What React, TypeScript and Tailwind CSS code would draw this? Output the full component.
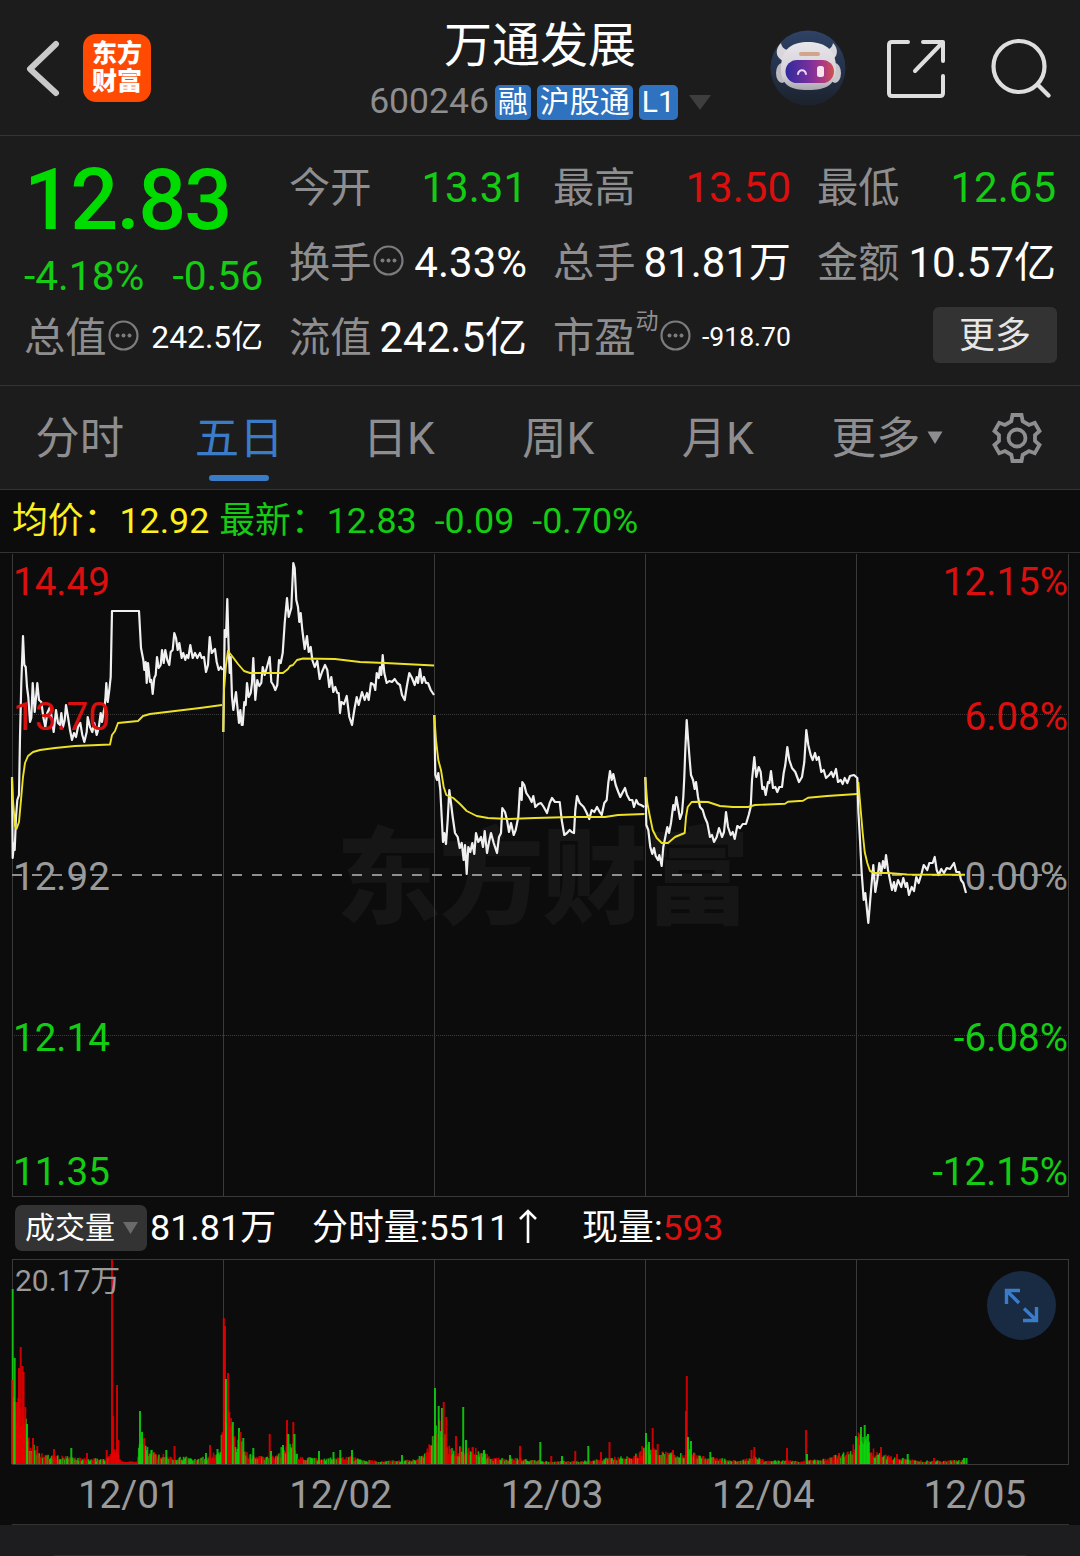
import type { ReactNode } from "react";

type Point = [number, number];

// One polyline per trading day, in page pixels
const priceDays: string[] = [
  "12,777 12.7,858 14,843 14.7,850 16,817 17.3,800 19,795 20,737 21.3,683 23,636 24.3,665 25.7,667 27,687 28.3,697 30,722 31.3,718 32.7,683 34.7,712 37.3,683 39,700 41.3,702 43.3,717 45.3,727 47.3,713 50,707 52,720 53.7,732 56,710 58,723 60,725 61.3,713 63,727 64.7,720 66,705 68,717 70,730 72,740 74,733 76,737 78,727 80.3,723 82.3,735 84.3,742 86.7,732 87.7,717 90,727 92.3,732 94.3,723 96.7,735 98.7,728 100.7,713 102,722 104,710 105.3,700 106.3,683 107.7,702 109.3,690 110.7,677 112,611 139,611 141,648 143.3,660 144.3,670 145.7,662 146.7,683 148,663 150,682 151.3,680 152.7,694 154.3,678 155.7,675 157,657 158.7,668 160.7,665 162,650 163.7,663 165.3,650 167.3,660 169.3,665 170.7,652 172.7,650 174.3,633 176,638 177.7,650 179.3,643 181.7,658 183.3,653 185.3,660 186.7,655 188.3,658 190.3,645 192.7,658 195,653 197.3,658 200,653 201.7,658 204,657 206,672 208,665 209.7,637 211.7,653 215,649 216.7,662 218.7,670 220.7,667 222.7,670",
  "223.3,732 224.7,630 226,637 227.3,599 228.7,650 229.7,673 230.7,657 232,697 233.3,710 236,692 237.7,710 239,723 240.3,710 241.7,725 242.7,725 244.3,702 245.7,705 247,683 248.7,697 250.7,693 252,683 253.3,658 255.3,700 257.3,680 259.3,686 261.3,683 262.7,667 264.7,675 266.7,668 269.7,657 271.3,682 273.3,685 275.3,690 277.3,685 279,660 280.7,663 282.7,653 284.7,623 287,598 288.7,617 291.3,608 293.3,563 294.7,568 296.3,600 298,607 299.3,622 300.7,613 302.3,630 304.7,649 307,636 308.7,652 310.7,647 312.3,660 314.7,667 317.3,661 319.7,679 322,672 325,665 327.3,670 329.3,687 331.3,677 333.3,692 335.3,687 337.3,693 338.7,693 340,713 341.3,702 344,704 346.7,696 349.3,717 352,725 354.3,710 356.7,697 358.7,705 362,692 364.7,700 367,693 368.7,700 371,683 374,685 375.3,690 376.7,673 378.7,678 380,667 381.3,675 382.7,655 384.3,673 386.7,683 389.3,681 392,682 394.7,679 397.3,683 400,685 402,695 404.7,700 406.7,687 409.3,673 412,678 414.7,685 416.7,677 418,683 420,669 422,683 424,677 426,683 428,683 430.7,690 434,695",
  "434.3,715 435.3,775 437,780 438.3,773 440.3,790 441.7,817 443,842 444.3,833 446,844 447.7,820 449.3,790 451,803 452.7,817 455,833 457.7,837 459.7,848 461.7,843 463.7,860 465,845 466.7,874 468.3,847 470.3,852 472.3,843 474.3,854 476,833 478.3,842 481,837 483,847 484.7,831 487,853 489,842 491,833 493.7,843 497,853 499,837 501,833 502.3,808 505,812 507,820 509,832 511,823 513.7,835 515.7,830 518.3,817 520,788 521.7,800 522.3,782 524.3,785 526.3,793 529.7,798 531.7,802 533.3,796 535.3,807 538.3,804 541,803 543.7,807 547,813 549.7,803 552,798 555,802 559.7,802 561.7,820 564.3,835 567,833 569.7,830 571.7,832 574,833 575.3,810 577,796 579.7,803 583.7,807 586.3,812 589.3,819 591.7,810 594.3,812 597,807 599.7,812 601.7,815 604.3,803 606.7,800 608.3,783 610,771 611.7,780 613.3,774 615.7,785 618.3,792 620.3,797 622.3,793 625,788 627,795 629.7,800 632.3,800 634,807 636.3,800 638.3,804 641,805 644.3,807",
  "645.3,777 646.3,825 648.3,830 650.3,847 652.3,854 654,848 655.7,856 658,860 659.3,855 661.7,866 663.3,847 665.3,837 667.3,827 669,833 671,823 673.3,805 674.7,810 676.3,797 678,807 680,819 682,813 683.3,797 684.3,777 685.3,750 686.7,720 688,738 689.7,760 691,775 693,780 694.7,789 696,782 698,797 700,807 702.7,810 704.7,817 707.3,823 710,837 712,835 714,842 716.7,837 719,828 722,837 724,832 726,812 728,827 730.7,835 732.7,832 734.7,839 737.3,826 740,828 742.7,824 746,824 748.7,815 750.7,807 752,780 754.3,757 756.3,777 758.7,767 760.7,772 762.3,789 764,787 765.7,795 768,782 769.3,783 771,771 773,788 775.3,787 777.3,792 779.3,787 782,787 783.7,773 785.3,765 787.3,747 789.3,760 792,768 795.3,772 799,782 802,777 804.3,762 806.3,730 808.3,745 810.7,755 812.7,760 815,753 816.7,760 818.7,757 821.3,772 823.7,770 826,778 829.3,775 831.3,772 833.3,777 836,769 838,782 840.7,780 842.7,784 844.7,778 847.3,783 850,776 854,775 857.3,778 858.3,810 860,840 861.7,873 863.7,900 865.3,893 867,910 868.3,923 870,903 871.3,887 873.3,865 875.3,892 877.3,880 879.3,863 881.3,873 883,861 884.7,868 886,855 888,870 890,880 892,890 894,882 895.3,891 898,880 901.3,887 903.3,878 905.7,887 907,883 909,895 911.7,887 914,891 916.3,877 918.7,883 921.7,873 923.7,865 927.3,870 929.3,863 932.7,863 934.7,857 936.7,870 938.7,875 941.3,869 944,873 946.7,868 950,869 954,863 956.3,872 959.3,872 961,880 963.3,883 966,893",
];

const averageDays: string[] = [
  "12,777 13,800 15,826 16.5,829 19,822 21,800 23,777 25,763 28,756 33,752 40,750 55,748 75,746 110,744.5 112,735 115,731 118,723 138,721 143,716 150,714 175,711 200,708 222,705",
  "223.3,732 224,690 226,665 228,651 232,656 238,664 244,671 250,673 283,673 288,669 290,666 293,665 297,660 303,658.5 335,659 360,662 385,663 434,665.5",
  "434.3,715 436,740 438.3,760 441,770 443.7,787 446.3,795 453.3,798 460,804 466.7,811 476.7,816 488,818 508,819 535,818 572,817 605,817 618,815 644.5,814",
  "645.3,777 647.3,803 650,817 652.7,830 656.7,838 661.7,843 668,843 675,837 684.7,833 686,817 687.7,807 691.7,802 698,801.7 708,802 720,806 733,807 748,807 755,805 785,803.7 788,801.7 803,800.7 808,797.7 827,796 857,794",
  "858.3,782 860.7,810 862.7,833 864.7,852 867.3,863 870,871 875,873 888,873 907,874.5 965,874.7",
];

// Typical volume height along the x axis
const volumeEnvelope: Point[] = [
  [12, 80], [15, 62], [19, 60], [24, 58], [27, 40], [31, 22], [37, 14], [45, 9],
  [70, 7], [90, 5], [108, 6], [112, 18], [117, 14], [121, 3], [137, 3], [140, 28],
  [147, 18], [155, 11], [170, 8], [200, 6], [218, 12], [222, 30], [224, 60],
  [230, 48], [236, 25], [243, 20], [248, 10], [265, 7], [275, 8], [285, 20],
  [293, 20], [298, 8], [320, 5], [350, 8], [362, 4], [385, 3], [410, 4], [424, 9],
  [432, 30], [437, 44], [443, 40], [447, 20], [455, 15], [466, 18], [484, 12],
  [493, 6], [520, 6], [545, 3], [580, 3], [600, 5], [615, 7], [635, 9], [645, 20],
  [655, 16], [665, 12], [684, 10], [690, 14], [697, 8], [720, 6], [740, 3],
  [754, 8], [765, 4], [800, 3], [825, 5], [850, 14], [857, 28], [863, 32],
  [868, 24], [875, 12], [890, 8], [905, 5], [930, 3], [966, 4],
];

const volumeSpikes: [number, number, "r" | "g"][] = [
  [12.7, 175, "g"], [12, 84, "r"], [14.7, 106, "g"], [19, 96, "r"], [20.7, 117, "r"],
  [22.5, 98, "r"], [23.6, 92, "r"], [25.3, 57, "r"], [17, 62, "r"], [18, 60, "r"],
  [27, 40, "g"], [33, 26, "r"], [37.3, 18, "r"], [54, 15, "r"], [71.3, 16, "g"],
  [87, 11, "r"], [106.7, 14, "r"], [112, 205, "r"], [113.2, 48, "r"], [117, 79, "r"],
  [118.3, 24, "r"], [140, 53, "g"], [142, 32, "g"], [144, 26, "r"], [166.3, 14, "g"],
  [174.5, 18, "r"], [206, 11, "g"], [210, 19, "r"], [217.5, 15, "g"], [223.8, 146, "r"],
  [225, 138, "r"], [226, 85, "g"], [228, 91, "r"], [229.3, 52, "r"], [232.8, 42, "g"],
  [239, 36, "g"], [240.5, 32, "r"], [243.3, 26, "g"], [253.3, 16, "g"], [269.7, 30, "r"],
  [271, 13, "g"], [283, 19, "g"], [287, 44, "r"], [288.3, 30, "g"], [293.3, 42, "r"],
  [294.5, 30, "g"], [319, 13, "g"], [333.5, 12, "g"], [340.3, 14, "g"], [352, 14, "g"],
  [402, 9, "g"], [430, 19, "r"], [435, 76, "g"], [438.7, 58, "g"], [442, 56, "g"],
  [443.7, 62, "r"], [446.3, 47, "r"], [456, 28, "r"], [463.2, 57, "g"], [466, 24, "g"],
  [484, 14, "g"], [510, 9, "g"], [520, 18, "r"], [540.3, 22, "g"], [551.3, 8, "r"],
  [562, 8, "g"], [575.3, 13, "r"], [588.3, 18, "g"], [601, 12, "r"], [609.5, 22, "r"],
  [646, 31, "g"], [649, 22, "g"], [652.7, 36, "r"], [657.7, 20, "r"], [673, 14, "r"],
  [686, 53, "r"], [686.8, 88, "r"], [688, 27, "g"], [691, 23, "g"], [710.3, 12, "g"],
  [751.5, 14, "r"], [754.3, 17, "r"], [787, 16, "r"], [806, 34, "r"], [807, 10, "g"],
  [839, 11, "r"], [856, 28, "g"], [858.5, 27, "r"], [861, 37, "g"], [864.7, 39, "g"],
  [868, 30, "g"], [881, 17, "r"], [897, 10, "r"], [907.7, 10, "g"], [934, 6, "r"],
  [964, 6, "g"], [966.5, 6, "g"],
];

const envelopeAt = (x: number) => {
  const i = volumeEnvelope.findIndex(([px]) => px >= x);
  if (i <= 0) return volumeEnvelope[0][1];
  const [x0, y0] = volumeEnvelope[i - 1];
  const [x1, y1] = volumeEnvelope[i];
  return y0 + ((x - x0) / (x1 - x0)) * (y1 - y0);
};

const noise = (n: number) => {
  const v = Math.sin(n * 12.9898 + 4.1) * 43758.5453;
  return v - Math.floor(v);
};

const volumeBars = Array.from({ length: 1084 }, (_, i) => {
  const x = 12 + i * 0.88;
  const solidRed = (x > 15 && x < 26) || (x > 108 && x < 138);
  const solidGreen = x > 859 && x < 869;
  const red = solidRed || (!solidGreen && noise(i + 500) > 0.48);
  const height = Math.max(2, envelopeAt(x) * (0.45 + noise(i) * 0.65));
  return { x, height, red };
});

const gridX = [12.5, 223.5, 434.5, 645.5, 856.5, 1068.5];

const Line = () => <div className="h-px w-full bg-[#333333]" />;

const MoreDots = () => (
  <svg className="mb-[7px] ml-px h-[31px] w-[31px] shrink-0" viewBox="0 0 31 31">
    <circle cx="15.5" cy="15.5" r="14" fill="none" stroke="#7c7c7e" strokeWidth="2.2" />
    <circle cx="9.5" cy="15.5" r="2" fill="#7c7c7e" />
    <circle cx="15.5" cy="15.5" r="2" fill="#7c7c7e" />
    <circle cx="21.5" cy="15.5" r="2" fill="#7c7c7e" />
  </svg>
);

const Robot = () => (
  <svg className="h-[76px] w-[76px]" viewBox="0 0 76 76">
    <defs>
      <linearGradient id="sky" x1="0" y1="0" x2="0" y2="1">
        <stop offset="0" stopColor="#2f4265" />
        <stop offset="0.6" stopColor="#222f45" />
        <stop offset="1" stopColor="#1c222c" />
      </linearGradient>
      <linearGradient id="shell" x1="0" y1="0" x2="0" y2="1">
        <stop offset="0" stopColor="#e8e6ea" />
        <stop offset="0.7" stopColor="#d4d0d6" />
        <stop offset="1" stopColor="#a9a5ae" />
      </linearGradient>
      <linearGradient id="visor" x1="0" y1="0" x2="1" y2="0">
        <stop offset="0" stopColor="#2f2a9c" />
        <stop offset="0.5" stopColor="#7a2f9c" />
        <stop offset="0.8" stopColor="#b03a80" />
        <stop offset="1" stopColor="#d0524a" />
      </linearGradient>
    </defs>
    <circle cx="38" cy="38" r="37.5" fill="url(#sky)" />
    <path d="M11 13c-6 6-6 14 2 18l10-11c-6 1-11-1-12-7zM63 13c6 6 5 14-2 18l-10-11c6 1 11-1 12-7z" fill="#d9d7dc" />
    <ellipse cx="12" cy="43" rx="6" ry="10" fill="#bdb9c0" />
    <ellipse cx="65" cy="43" rx="6" ry="10" fill="#c9c5cc" />
    <path d="M38 12c-15 0-26 6-27 24-1 19 9 24 27 24s29-5 28-24c-1-18-13-24-28-24z" fill="url(#shell)" />
    <rect x="29" y="22" width="21" height="4" rx="2" fill="#d2a58a" />
    <rect x="15.500" y="30" width="48.500" height="23" rx="11.500" fill="url(#visor)" />
    <path d="M28 44c1-5 7-5 8 0" fill="none" stroke="#e6d9f5" strokeWidth="2" strokeLinecap="round" />
    <rect x="47" y="36" width="7" height="11" rx="2.5" fill="#f6e3ee" />
  </svg>
);

const Badge = ({ children }: { children: ReactNode }) => (
  <span className="flex h-[35px] items-center rounded-[5px] bg-[#2f72bf] px-[3px] text-[30px] leading-none text-white">
    {children}
  </span>
);

const Header = () => (
  <header className="flex h-[135px] items-center justify-between pl-[26px] pr-[28px]">
    <div className="flex w-[284px] items-center">
      <svg className="h-[58px] w-[34px]" viewBox="0 0 34 58">
        <path d="M30 5L4 30l26 24" fill="none" stroke="#c9c9c9" strokeWidth="6" strokeLinecap="round" strokeLinejoin="round" />
      </svg>
      <div className="ml-[23px] flex h-[68px] w-[68px] flex-col items-center justify-center rounded-[13px] bg-[#ff4a04] text-[25px] font-black leading-[28px] text-white">
        <span>东方</span>
        <span>财富</span>
      </div>
    </div>
    <div className="flex flex-col items-center pt-[3px]">
      <h1 className="text-[48px] leading-[56px] text-white">万通发展</h1>
      <div className="mt-[10px] flex h-[36px] items-center gap-[6px]">
        <span className="text-[35.500px] leading-none text-[#8e8e90]">600246</span>
        <Badge>融</Badge>
        <Badge>沪股通</Badge>
        <Badge>L1</Badge>
        <svg className="ml-[5px] h-[15px] w-[22px]" viewBox="0 0 22 15">
          <path d="M0 0h22L11 15z" fill="#3e3e3e" />
        </svg>
      </div>
    </div>
    <div className="flex w-[282px] items-center">
      <Robot />
      <svg className="ml-[40px] h-[60px] w-[60px]" viewBox="0 0 60 60" fill="none" stroke="#dedede" strokeWidth="4" strokeLinecap="round" strokeLinejoin="round">
        <path d="M22 4H6q-3 0-3 3v48q0 3 3 3h48q3 0 3-3V38M37 4h20v19M56 5L29 33" />
      </svg>
      <svg className="ml-[43px] h-[60px] w-[62px]" viewBox="0 0 62 60" fill="none" stroke="#dedede" strokeWidth="4.200" strokeLinecap="round">
        <circle cx="30" cy="28.500" r="25.500" />
        <path d="M49 47L59.500 57.500" />
      </svg>
    </div>
  </header>
);

const Cell = ({ label, children }: { label: ReactNode; children: ReactNode }) => (
  <div className="flex h-[75px] items-center justify-between whitespace-nowrap">
    <span className="flex items-center pt-[3px] text-[41.300px] text-[#8e8e90]">{label}</span>
    {children}
  </div>
);

const Stats = () => (
  <section className="grid h-[249px] grid-cols-[239px_238px_238px_239px] gap-x-[26px] px-6 pt-[14px] text-[42px] leading-none text-white">
    <div>
      <div className="flex h-[100px] items-center pt-[2px] text-[84.500px] font-medium tracking-[-1.800px] text-[#00dc00]">12.83</div>
      <div className="flex h-[50px] items-center justify-between pt-[2px] text-[40.700px] text-[#14cc14]">
        <span>-4.18%</span>
        <span>-0.56</span>
      </div>
      <Cell label={<>总值<MoreDots /></>}>
        <span className="text-[31.800px]">242.5亿</span>
      </Cell>
    </div>
    <div>
      <Cell label="今开"><span className="text-[#14cc14]">13.31</span></Cell>
      <Cell label={<>换手<MoreDots /></>}><span>4.33%</span></Cell>
      <Cell label="流值"><span>242.5亿</span></Cell>
    </div>
    <div>
      <Cell label="最高"><span className="text-[#dc0f0f]">13.50</span></Cell>
      <Cell label="总手"><span>81.81万</span></Cell>
      <Cell
        label={
          <>
            市盈
            <span className="mb-9 text-[23px]">动</span>
            <MoreDots />
          </>
        }
      >
        <span className="text-[26.600px]">-918.70</span>
      </Cell>
    </div>
    <div>
      <Cell label="最低"><span className="text-[#14cc14]">12.65</span></Cell>
      <Cell label="金额"><span>10.57亿</span></Cell>
      <div className="flex h-[70px] items-center justify-end">
        <button className="-mr-px h-[56px] w-[124px] rounded-[6px] bg-[#333333] pt-[2px] text-[36px] leading-none text-[#e6e6e6]">更多</button>
      </div>
    </div>
  </section>
);

const tabs = ["分时", "五日", "日K", "周K", "月K"];

const Tabs = () => (
  <nav className="flex h-[103px] items-center text-[44.400px] leading-none text-[#8e8e90]">
    {tabs.map((tab) => (
      <div key={tab} className="relative flex h-full w-[159.500px] items-center justify-center pt-[3px]">
        <span className={tab === "五日" ? "text-[#3a7cc8]" : ""}>{tab}</span>
        {tab === "五日" && (
          <div className="absolute bottom-[8px] left-[49px] h-[6px] w-[60px] rounded-full bg-[#3a7cc8]" />
        )}
      </div>
    ))}
    <span className="ml-[34px] pt-[3px]">更多</span>
    <svg className="ml-[7px] h-[14px] w-[16px]" viewBox="0 0 16 14">
      <path d="M0.500 0.500h15L8 13z" fill="#8e8e90" />
    </svg>
    <svg className="ml-[48px] h-[52px] w-[52px]" viewBox="0 0 52 52" fill="none" stroke="#8e8e90" strokeWidth="3.800">
      <path d="M21.500 3h9l1.200 6.200L38 13l5.800-2.200L48.500 19 44 23v6l4.500 4-4.700 8.200L38 39l-6.300 3.800L30.500 49h-9l-1.200-6.200L14 39l-5.800 2.200L3.500 33 8 29v-6l-4.500-4 4.700-8.200L14 13l6.300-3.800z" />
      <circle cx="26" cy="26" r="8.500" />
    </svg>
  </nav>
);

const priceLabels = [
  { price: "14.49", percent: "12.15%", style: "top-[10px] text-[#dc0f0f]" },
  { price: "13.70", percent: "6.08%", style: "top-[145px] text-[#dc0f0f]" },
  { price: "12.92", percent: "0.00%", style: "top-[305px] text-[#9a9a9a]" },
  { price: "12.14", percent: "-6.08%", style: "top-[466px] text-[#14cc14]" },
  { price: "11.35", percent: "-12.15%", style: "top-[600px] text-[#14cc14]" },
];

const PriceChart = () => (
  <section className="relative h-[644px]">
    <svg className="block h-[644px] w-full" viewBox="0 553 1080 644" fill="none">
      <text x="336" y="915" fontSize="105" fontWeight="900" fill="#161616" textLength="414">东方财富</text>
      {gridX.map((x) => (
        <path key={x} d={`M${x} 554V1196`} stroke="#3a3a3a" />
      ))}
      <path d="M12 1196.500H1069" stroke="#3a3a3a" />
      <path d="M12 714.500H1069M12 1035.500H1069" stroke="#3a3a3a" strokeDasharray="1 1" />
      <path d="M12 875H1069" stroke="#8f8f8f" strokeWidth="2" strokeDasharray="10 10" />
      {priceDays.map((points) => (
        <polyline key={points} points={points} stroke="#f0f0f0" strokeWidth="2.200" strokeLinejoin="round" />
      ))}
      {averageDays.map((points) => (
        <polyline key={points} points={points} stroke="#ece127" strokeWidth="1.900" strokeLinejoin="round" />
      ))}
    </svg>
    {priceLabels.map(({ price, percent, style }) => (
      <div key={price} className={`absolute left-[13px] right-[12px] flex justify-between text-[38.600px] leading-[38px] ${style}`}>
        <span>{price}</span>
        <span>{percent}</span>
      </div>
    ))}
  </section>
);

const VolumeChart = () => (
  <section className="relative h-[206px]">
    <svg className="block h-[206px] w-full" viewBox="0 1259 1080 206" fill="none">
      <path d="M12 1259.500H1069M12 1464.500H1069" stroke="#3a3a3a" />
      {gridX.map((x) => (
        <path key={x} d={`M${x} 1259V1464`} stroke="#3a3a3a" />
      ))}
      {volumeBars.map(({ x, height, red }) => (
        <rect key={x} x={x - 0.8} y={1464 - height} width="1.600" height={height} fill={red ? "#f00000" : "#0cd80c"} opacity="0.8" />
      ))}
      {volumeSpikes.map(([x, height, tone]) => (
        <rect key={x} x={x - 1} y={1464 - height} width="2" height={height} fill={tone === "r" ? "#e60000" : "#0cd40c"} opacity="0.88" />
      ))}
    </svg>
    <span className="absolute left-[15px] top-[7px] text-[30px] leading-[30px] text-[#9a9a9a]">20.17万</span>
    <button className="absolute right-[24px] top-[12px] h-[69px] w-[69px] rounded-full bg-[#182b42]">
      <svg className="h-[69px] w-[69px]" viewBox="0 0 69 69" fill="none" stroke="#3a7cc8" strokeWidth="3.400">
        <path d="M33 19.500H19.500V33M20 20L32 32M37 37.500L50 50M36 49.500H49.500V36" />
      </svg>
    </button>
  </section>
);

const VolumeBar = () => (
  <div className="flex h-[62px] items-center whitespace-pre pl-[15px] text-[35.900px] leading-none text-white">
    <button className="flex h-[46px] w-[132px] items-center rounded-[7px] bg-[#333333] pl-[10px] text-[30px] leading-none">
      成交量
      <svg className="ml-[8px] h-[12px] w-[15px]" viewBox="0 0 15 12">
        <path d="M0 0h15L7.500 12z" fill="#6a6a6a" />
      </svg>
    </button>
    <span className="ml-[3px] pt-[2px]">81.81万</span>
    <span className="ml-[36px] pt-[2px]">分时量:5511</span>
    <svg className="mb-[4px] ml-[9px] h-[36px] w-[20px]" viewBox="0 0 20 36" fill="none" stroke="#ffffff" strokeWidth="2.600">
      <path d="M10 35V3M2 11l8-8 8 8" />
    </svg>
    <span className="ml-[44px] pt-[2px]">现量:</span>
    <span className="pt-[2px] text-[#dc0f0f]">593</span>
  </div>
);

const dates = ["12/01", "12/02", "12/03", "12/04", "12/05"];

export default function App() {
  return (
    <div className="flex h-[1556px] w-[1080px] flex-col overflow-hidden bg-[#0c0c0c] font-[Roboto,'Noto_Sans_CJK_SC',sans-serif]">
      <div className="bg-[#1c1c1c]">
        <Header />
        <Line />
        <Stats />
        <Line />
        <Tabs />
        <Line />
      </div>
      <div className="flex h-[62px] items-center whitespace-pre pl-[12px] pt-[2px] text-[35.800px] leading-none text-[#14cc14]">
        <span className="text-[#fdf01e]">均价：12.92</span>
        <span className="ml-[10px]">最新：12.83</span>
        <span className="ml-[18px]">-0.09</span>
        <span className="ml-[18px]">-0.70%</span>
      </div>
      <Line />
      <PriceChart />
      <VolumeBar />
      <VolumeChart />
      <div className="ml-[12px] mr-[11px] flex h-[60px] items-center border-b border-[#333333] pt-[2px] text-[38.600px] leading-none text-[#9a9a9a]">
        {dates.map((date) => (
          <span key={date} className="flex-1 pl-[23px] text-center">{date}</span>
        ))}
      </div>
      <div className="flex flex-1 flex-col justify-end bg-[#1d1d20]">
        <div className="mx-[54px] h-px bg-[#2c2b40]" />
      </div>
    </div>
  );
}
